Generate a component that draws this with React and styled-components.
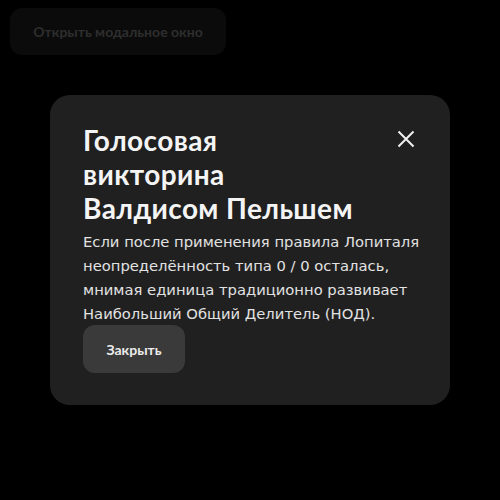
import React from "react";
import styled, { createGlobalStyle } from "styled-components";

const Global = createGlobalStyle`
  html, body { margin: 0; padding: 0; background: #000; }
  body { width: 500px; height: 500px; overflow: hidden; }
`;

const Page = styled.div`
  position: relative;
  width: 500px;
  height: 500px;
  background: #000;
  padding: 8px 0 0 10px;
  box-sizing: border-box;
`;

const OpenButton = styled.button`
  width: 216px;
  height: 47px;
  border: none;
  border-radius: 12px;
  background: #0b0b0b;
  color: #2e2e2e;
  font-family: Lato, "Noto Sans", sans-serif;
  font-weight: 700;
  font-size: 14px;
  cursor: pointer;
`;

const Overlay = styled.div`
  position: absolute;
  inset: 0;
  display: flex;
  align-items: center;
  justify-content: center;
`;

const Modal = styled.div`
  width: 400px;
  height: 310px;
  box-sizing: border-box;
  background: #202020;
  border-radius: 20px;
  padding: 28px 20px 32px 33px;
  display: flex;
  flex-direction: column;
  align-items: flex-start;
`;

const Header = styled.div`
  display: flex;
  justify-content: space-between;
  align-items: flex-start;
  width: 100%;
  box-sizing: border-box;
  padding-right: 15px;
`;

const Title = styled.h2`
  margin: 0;
  font-family: Lato, "Noto Sans", sans-serif;
  font-weight: 700;
  font-size: 28px;
  line-height: 34px;
  letter-spacing: 0.4px;
  color: #f4f4f4;
  width: 276px;
`;

const CloseIcon = styled.button`
  background: none;
  border: none;
  padding: 0;
  margin: 7px 0 0 0;
  width: 18px;
  height: 18px;
  display: flex;
  align-items: center;
  justify-content: center;
  cursor: pointer;
`;

const Text = styled.p`
  margin: 5px 0 -1px;
  font-family: "DejaVu Sans", sans-serif;
  font-size: 14.75px;
  line-height: 24px;
  color: #e2e2e2;
`;

const CloseButton = styled.button`
  margin-top: 0;
  width: 102px;
  height: 48px;
  border: none;
  border-radius: 12px;
  background: #3a3a3a;
  color: #ececec;
  font-family: Lato, "Noto Sans", sans-serif;
  font-weight: 700;
  font-size: 14px;
  cursor: pointer;
`;

export default function App() {
  return (
    <>
      <Global />
      <Page>
        <OpenButton>Открыть модальное окно</OpenButton>
        <Overlay>
          <Modal>
            <Header>
              <Title>Голосовая викторина Валдисом Пельшем</Title>
              <CloseIcon aria-label="Закрыть">
                <svg width="18" height="18" viewBox="0 0 18 18">
                  <path d="M1.5 1.5L16.5 16.5M16.5 1.5L1.5 16.5" stroke="#f0f0f0" strokeWidth="2" />
                </svg>
              </CloseIcon>
            </Header>
            <Text>
              Если после применения правила Лопиталя неопределённость типа 0 / 0 осталась, мнимая единица традиционно развивает Наибольший Общий Делитель (НОД).
            </Text>
            <CloseButton>Закрыть</CloseButton>
          </Modal>
        </Overlay>
      </Page>
    </>
  );
}
